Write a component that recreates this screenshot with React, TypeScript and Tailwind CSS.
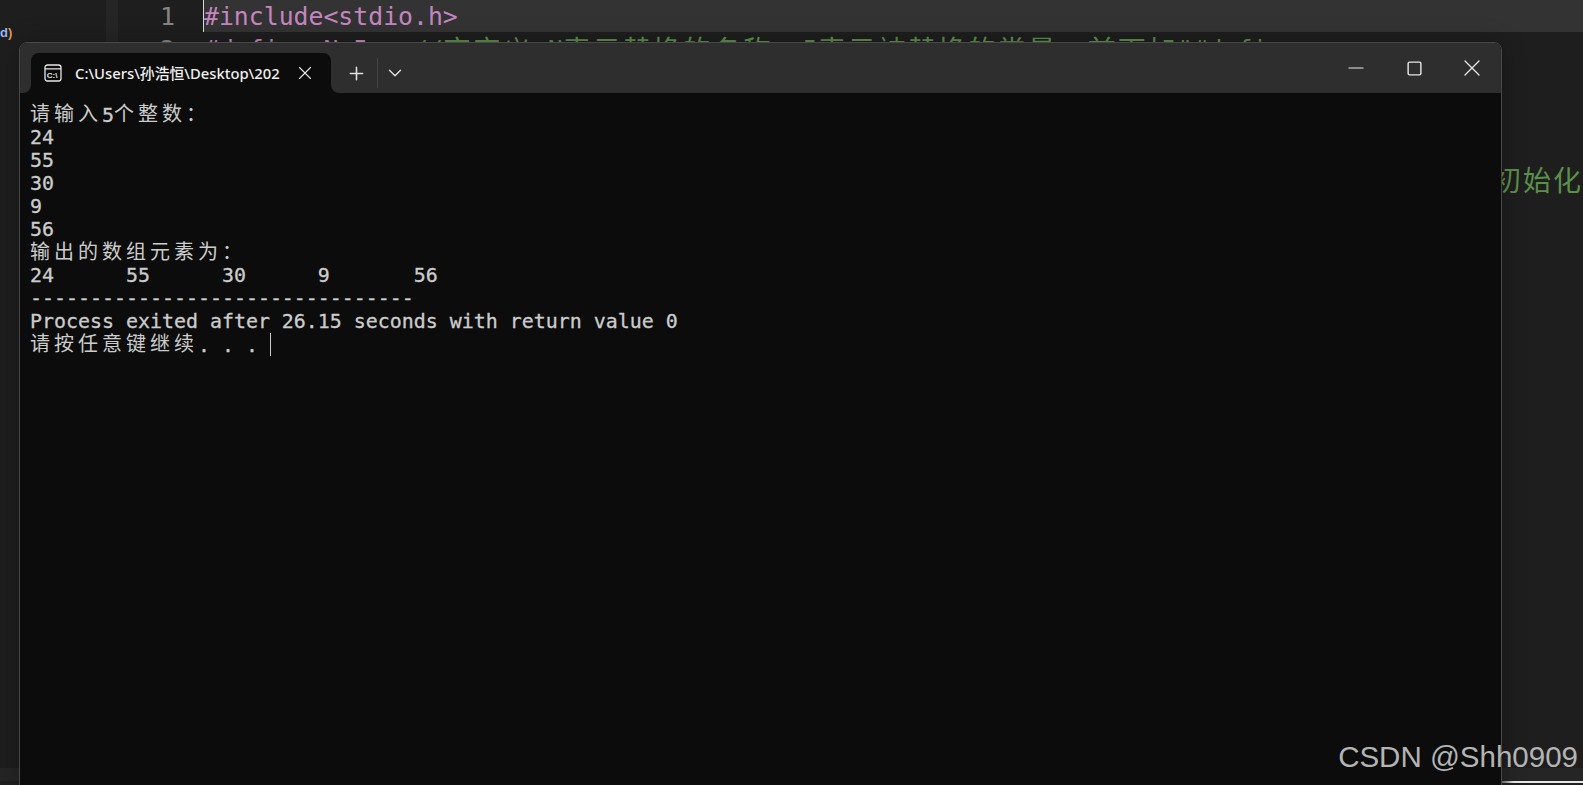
import { Minus, Plus, ChevronDown, X, Square } from "lucide-react";

const LINES: string[] = [
  "请输入5个整数：",
  "24",
  "55",
  "30",
  "9",
  "56",
  "输出的数组元素为：",
  "24      55      30      9       56",
  "--------------------------------",
  "Process exited after 26.15 seconds with return value 0",
  "请按任意键继续. . . ",
];

// cjk glyphs take two console cells
function ConsoleLine({ text }: { text: string }) {
  const parts = text.match(/[\u3000-\u9fff\uff00-\uffef]+|[^\u3000-\u9fff\uff00-\uffef]+/g) ?? [];
  return (
    <div className="h-[23px] leading-[23px] whitespace-pre">
      {parts.map((part, i) =>
        /[\u3000-\u9fff\uff00-\uffef]/.test(part) ? (
          <span key={i} className="text-[20px] leading-none align-[1px] tracking-[4px] [-webkit-text-stroke:0px] font-['Noto_Sans_CJK_SC',sans-serif]">
            {part}
          </span>
        ) : (
          <span key={i}>{part}</span>
        ),
      )}
    </div>
  );
}

function ConsoleIcon() {
  return (
    <svg width="18" height="18" viewBox="0 0 18 18" fill="none" className="shrink-0">
      <rect x="1" y="1" width="16" height="16" rx="2.5" stroke="#e8e8e8" strokeWidth="1.3" />
      <path d="M1 4.8H17" stroke="#e8e8e8" strokeWidth="1.2" />
      <text x="2.8" y="13.6" fontSize="8" fontWeight="700" fill="#e8e8e8" fontFamily="Liberation Sans, sans-serif">
        C:\
      </text>
    </svg>
  );
}

function Cjk({ children }: { children: string }) {
  return (
    <span className="text-[28px] leading-none align-[-3px] tracking-[2px] font-['Noto_Sans_CJK_SC',sans-serif]">
      {children}
    </span>
  );
}

export default function App() {
  return (
    <div className="relative w-[1583px] h-[785px] overflow-hidden bg-[#1e1e1e] font-['DejaVu_Sans_Mono',monospace]">
      {/* editor behind the terminal */}
      <div className="flex h-[768px]">
        <div className="w-[106px] shrink-0 pt-[25px] text-[13px] font-bold leading-[16px] font-['Liberation_Sans',sans-serif]">
          <span className="text-[#9cb4f0]">d</span>
          <span className="text-[#d89a5a]">)</span>
        </div>
        <div className="w-[12px] shrink-0 bg-[#252525]" />
        <div className="w-[85px] shrink-0 pr-[28px] text-right text-[25px] leading-[33px] text-[#858585]">
          <div className="h-[33px]">1</div>
          <div className="h-[33px]">2</div>
        </div>
        <div className="flex-1 min-w-0 text-[24.8px] leading-[33px]">
          <div className="h-[32px] bg-[#333333] border-l border-[#d8d8d8] text-[#c586c0] whitespace-pre">#include&lt;stdio.h&gt;</div>
          <div className="h-[33px] pl-[1px] whitespace-pre mt-[1px]">
            <span className="text-[#c586c0]">#define N 5   </span>
            <span className="text-[#5b8f4a]">
              //<Cjk>宏定义</Cjk> N<Cjk>表示替换的名称，</Cjk>5<Cjk>表示被替换的常量，前面加</Cjk>"#define
            </span>
          </div>
          <div className="h-[33px]" />
          <div className="h-[33px]" />
          <div className="h-[32px]" />
          <div className="h-[33px] flex justify-end text-[#5b8f4a] text-[28px] leading-[30px] tracking-[2px] whitespace-pre font-['Noto_Sans_CJK_SC',sans-serif]">初始化</div>
        </div>
      </div>
      <div className="h-[13px] bg-[#252525]" />
      <div className="h-[2px] ml-[1501px] bg-gradient-to-r from-[#666666] to-[#e8e8e8] to-[15%]" />
      <div className="h-[2px] bg-[#202020]" />

      {/* terminal window */}
      <div className="absolute left-[19px] top-[42px] w-[1483px] h-[760px] flex flex-col rounded-t-[8px] border border-[#484848] bg-[#0c0c0c] overflow-hidden shadow-[0_0_24px_rgba(0,0,0,0.25)]">
        <div className="h-[50px] shrink-0 flex items-end bg-[#2e2e2e] pl-[11px]">
          <div className="relative h-[40px] w-[300px] flex items-center rounded-t-[8px] bg-[#0c0c0c] pl-[13px] text-[#f0f0f0] text-[14.8px] font-['Noto_Sans','Noto_Sans_CJK_SC',sans-serif]">
            <div className="absolute -left-2 bottom-0 w-2 h-2 bg-[#0c0c0c]">
              <div className="w-2 h-2 bg-[#2e2e2e] rounded-br-[8px]" />
            </div>
            <div className="absolute -right-2 bottom-0 w-2 h-2 bg-[#0c0c0c]">
              <div className="w-2 h-2 bg-[#2e2e2e] rounded-bl-[8px]" />
            </div>
            <ConsoleIcon />
            <span className="ml-[13px] w-[207px] overflow-hidden whitespace-nowrap font-medium">C:\Users\孙浩恒\Desktop\202</span>
            <X size={22} strokeWidth={1.2} className="ml-[12px] text-[#e8e8e8]" />
          </div>
          <div className="h-[40px] flex items-center text-[#e0e0e0]">
            <Plus size={21} strokeWidth={1.8} className="ml-[15px]" />
            <div className="ml-[10px] h-[30px] w-px bg-[#444444]" />
            <ChevronDown size={22} strokeWidth={1.5} className="ml-[6px] -mt-px" />
          </div>
          <div className="ml-auto h-[50px] flex items-center text-[#e8e8e8]">
            <div className="w-[58px] flex justify-center">
              <Minus size={24} strokeWidth={1.2} />
            </div>
            <div className="w-[58px] flex justify-center">
              <Square size={17} strokeWidth={2} />
            </div>
            <div className="w-[58px] flex justify-center">
              <X size={28} strokeWidth={1.1} />
            </div>
          </div>
        </div>
        <div className="pl-[10px] pt-[10px] text-[19.93px] text-[#cccccc] [-webkit-text-stroke:0.3px]">
          {LINES.map((line, i) => (
            <div key={i} className="relative">
              <ConsoleLine text={line} />
              {i === LINES.length - 1 && <div className="absolute left-[240px] top-0 h-[23px] w-px bg-[#cccccc]" />}
            </div>
          ))}
        </div>
      </div>

      {/* watermark */}
      <div className="absolute right-[5px] top-[740px] text-[29.5px] leading-[34px] text-[#b4b4b4] font-['Liberation_Sans',sans-serif]">
        CSDN @Shh0909
      </div>
    </div>
  );
}
